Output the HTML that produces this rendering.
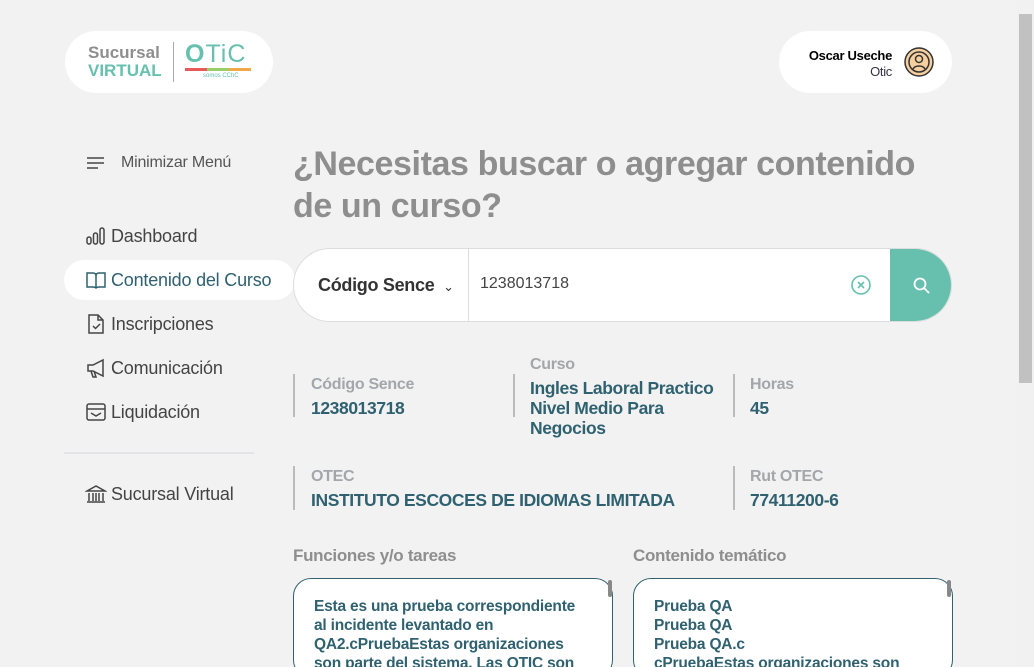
<!DOCTYPE html>
<html style="overflow:hidden;height:667px"><head><meta charset="utf-8"><style>
*{box-sizing:border-box;margin:0;padding:0}
body{width:1034px;height:667px;overflow:hidden;background:#f2f2f2;font-family:"Liberation Sans",Roboto,sans-serif;position:relative}
.abs{position:absolute}
.pill{background:#fff;border-radius:32px}
.nav{position:absolute;left:85px;font-size:18px;color:#444;display:flex;align-items:center;gap:4px;letter-spacing:-0.2px}
.nav svg{width:22px;height:22px;fill:none;stroke:#444;stroke-width:1.5}
.lab{font-size:16px;font-weight:bold;color:#a3a6aa;letter-spacing:-0.3px}
.val{font-size:17.5px;font-weight:bold;color:#2f6170;line-height:20px;letter-spacing:-0.4px}
.vl{position:absolute;width:2px;background:#bbb}
.box{position:absolute;top:578px;height:100px;border:1px solid #2f6170;border-radius:18px;background:#fff;padding:18px 30px 18px 20px;font-size:15.5px;font-weight:bold;color:#2f6170;line-height:19px;overflow:hidden;letter-spacing:-0.2px}
</style></head><body>
<div class="abs pill" style="left:65px;top:31px;width:208px;height:62px"></div>
<div class="abs" style="left:88px;top:44px;font-size:17px;color:#8e8e8e;line-height:18px;font-weight:bold">Sucursal<br><span style="color:#66c0ad">VIRTUAL</span></div>
<div class="abs" style="left:173px;top:42px;width:1px;height:40px;background:#aaa"></div>
<div class="abs" style="left:185px;top:40px;font-size:25px;color:#66c0ad;letter-spacing:1px"><b>O</b>TiC</div>
<div class="abs" style="left:185px;top:68px;width:22px;height:3px;background:#e85a5a"></div>
<div class="abs" style="left:207px;top:68px;width:22px;height:3px;background:#9ccc6a"></div>
<div class="abs" style="left:229px;top:68px;width:22px;height:3px;background:#f0a94a"></div>
<div class="abs" style="left:203px;top:73px;font-size:6px;color:#66c0ad">somos CChC</div>

<div class="abs pill" style="left:779px;top:31px;width:173px;height:62px"></div>
<div class="abs" style="left:790px;top:48px;width:102px;text-align:right;font-size:13px;line-height:16px;letter-spacing:-0.3px"><b>Oscar Useche</b><br><span style="color:#334">Otic</span></div>
<svg class="abs" style="left:904px;top:47px" width="30" height="30" viewBox="0 0 30 30"><circle cx="15" cy="15" r="14" fill="#f5cf9e" stroke="#333" stroke-width="1.5"/><circle cx="15" cy="15" r="10" fill="none" stroke="#333" stroke-width="1.5"/><circle cx="15" cy="12" r="3.5" fill="none" stroke="#333" stroke-width="1.5"/><path d="M9 22c2-4 10-4 12 0" fill="none" stroke="#333" stroke-width="1.5"/></svg>

<div class="nav" style="top:152px;color:#555;font-size:16px"><svg viewBox="0 0 22 22" style="margin-right:10px"><path d="M2 6h17M2 11h17M2 16h11"/></svg>Minimizar Menú</div>
<div class="nav" style="top:225px"><svg viewBox="0 0 22 22"><rect x="2" y="12" width="4" height="7" rx="2"/><rect x="8.5" y="8" width="4" height="11" rx="2"/><rect x="15" y="3" width="4" height="16" rx="2"/></svg>Dashboard</div>
<div class="abs" style="left:64px;top:260px;width:231px;height:40px;background:#fff;border-radius:20px"></div>
<div class="nav" style="top:269px;color:#2f6170"><svg viewBox="0 0 22 22" style="stroke:#2f6170"><path d="M11 5v14M2 4h6c2 0 3 1 3 3 0-2 1-3 3-3h6v14h-6c-2 0-3 1-3 1s-1-1-3-1H2z"/></svg>Contenido del Curso</div>
<div class="nav" style="top:313px"><svg viewBox="0 0 22 22"><path d="M4 2h9l5 5v13H4zM13 2v5h5M8 13l2.5 2.5L15 11"/></svg>Inscripciones</div>
<div class="nav" style="top:357px"><svg viewBox="0 0 22 22"><path d="M3 8h5l10-5v16L8 14H3zM6 14l2 6h3l-2-6"/></svg>Comunicación</div>
<div class="nav" style="top:401px"><svg viewBox="0 0 22 22"><rect x="2" y="3" width="18" height="16" rx="2"/><path d="M2 8h18M6 12l5 3 5-3"/></svg>Liquidación</div>
<div class="abs" style="left:64px;top:452px;width:190px;height:2px;background:#e3e3e8"></div>
<div class="nav" style="top:483px"><svg viewBox="0 0 22 22"><path d="M2 8l9-5 9 5zM4 10v8M8 10v8M11 10v8M14 10v8M18 10v8M2 19h18"/></svg>Sucursal Virtual</div>

<div class="abs" style="left:293px;top:143px;font-size:34px;font-weight:bold;color:#8e8e8e;line-height:42px;white-space:nowrap;letter-spacing:-0.4px">¿Necesitas buscar o agregar contenido<br>de un curso?</div>

<div class="abs" style="left:293px;top:248px;width:659px;height:74px;background:#fff;border:1px solid #ddd;border-radius:37px;overflow:hidden">
<div class="abs" style="left:24px;top:26px;font-size:18px;font-weight:bold;color:#333;letter-spacing:-0.3px">Código Sence <span style="font-weight:normal;font-size:13px;margin-left:4px">&#8964;</span></div>
<div class="abs" style="left:174px;top:0;width:1px;height:74px;background:#ddd"></div>
<div class="abs" style="left:186px;top:26px;font-size:16px;color:#444">1238013718</div>
<svg class="abs" style="left:557px;top:26px" width="20" height="20" viewBox="0 0 20 20"><circle cx="10" cy="10" r="9" fill="none" stroke="#66c0ad" stroke-width="1.6"/><path d="M7 7l6 6M13 7l-6 6" stroke="#66c0ad" stroke-width="1.6"/></svg>
<div class="abs" style="left:596px;top:0;width:64px;height:74px;background:#66c0ad"></div>
<svg class="abs" style="left:618px;top:27px" width="20" height="20" viewBox="0 0 20 20"><circle cx="8" cy="8" r="5.5" fill="none" stroke="#fff" stroke-width="1.8"/><path d="M12 12l5 5" stroke="#fff" stroke-width="1.8"/></svg>
</div>

<div class="vl" style="left:293px;top:374px;height:43px"></div>
<div class="vl" style="left:513px;top:374px;height:43px"></div>
<div class="vl" style="left:733px;top:374px;height:43px"></div>
<div class="abs" style="left:311px;top:376px"><div class="lab">Código Sence</div><div class="val" style="margin-top:4px">1238013718</div></div>
<div class="abs" style="left:530px;top:356px"><div class="lab">Curso</div><div class="val" style="margin-top:4px">Ingles Laboral Practico<br>Nivel Medio Para<br>Negocios</div></div>
<div class="abs" style="left:750px;top:376px"><div class="lab">Horas</div><div class="val" style="margin-top:4px">45</div></div>
<div class="vl" style="left:293px;top:466px;height:44px"></div>
<div class="vl" style="left:733px;top:466px;height:44px"></div>
<div class="abs" style="left:311px;top:468px"><div class="lab">OTEC</div><div class="val" style="margin-top:4px">INSTITUTO ESCOCES DE IDIOMAS LIMITADA</div></div>
<div class="abs" style="left:750px;top:468px"><div class="lab">Rut OTEC</div><div class="val" style="margin-top:4px">77411200-6</div></div>

<div class="abs" style="left:293px;top:546px;font-size:17px;font-weight:bold;color:#8e8e8e;letter-spacing:-0.3px">Funciones y/o tareas</div>
<div class="abs" style="left:633px;top:546px;font-size:17px;font-weight:bold;color:#8e8e8e;letter-spacing:-0.3px">Contenido temático</div>
<div class="box" style="left:293px;width:320px">Esta es una prueba correspondiente<br>al incidente levantado en QA2.cPruebaEstas organizaciones son parte del sistema. Las OTIC son</div>
<div class="abs" style="left:608px;top:580px;width:4px;height:17px;background:#888;border-radius:2px"></div>
<div class="box" style="left:633px;width:320px">Prueba QA<br>Prueba QA<br>Prueba QA.c<br>cPruebaEstas organizaciones son</div>
<div class="abs" style="left:947px;top:580px;width:4px;height:17px;background:#888;border-radius:2px"></div>

<div class="abs" style="left:1017px;top:0;width:17px;height:667px;background:#f1f1f1"></div>
<div class="abs" style="left:1019px;top:14px;width:13px;height:369px;background:#c1c1c1"></div>
</body></html>
